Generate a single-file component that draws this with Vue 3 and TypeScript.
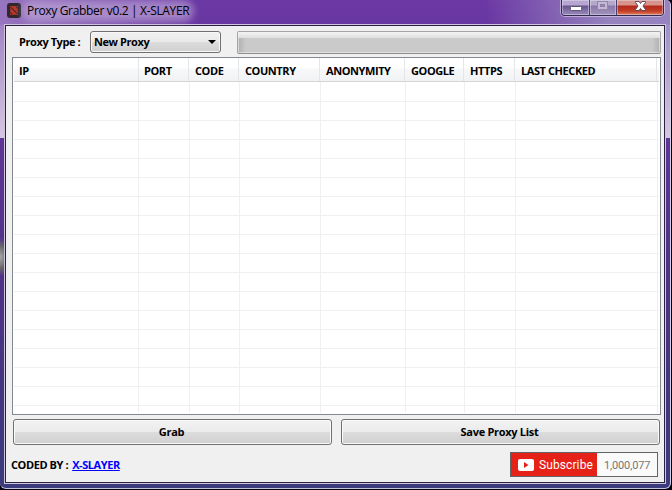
<template>
  <div class="window">
    <header class="titlebar">
      <svg class="app-icon" width="14" height="15" viewBox="0 0 14 15">
        <rect width="14" height="15" rx="3" fill="#30272d" />
        <path d="M3 3h8l-.5 3 .5 6-3-.3-5 .3.4-5z" fill="#b8392b" />
        <path d="M3.8 4.2 10.4 11M9 3.6l1.5 1.6M3.5 9.4l1.6 1.9" stroke="#4a2526" stroke-width="1.1" />
      </svg>
      <h1 class="title">Proxy Grabber v0.2 | X-SLAYER</h1>
      <div class="controls">
        <button class="control minimize" aria-label="Minimize">
          <svg width="27" height="15" viewBox="0 0 27 15">
            <rect x="8.5" y="6.5" width="11" height="4" rx="1" fill="#fff" stroke="#5c5677" />
          </svg>
        </button>
        <button class="control maximize" aria-label="Maximize">
          <svg width="26" height="15" viewBox="0 0 26 15">
            <rect x="7.5" y="1.5" width="10" height="8" fill="#c4b8d5" stroke="#9287a9" />
            <rect x="10.5" y="4.5" width="4" height="2" fill="#9d8db9" stroke="#8c7ca8" />
          </svg>
        </button>
        <button class="control close" aria-label="Close">
          <svg width="46" height="15" viewBox="0 0 46 15">
            <path d="M18.5 1.5h3.5l1.5 2 1.5-2h3.5v1l-2.5 3.5 2.5 3.5v1h-3.5l-1.5-2-1.5 2h-3.5v-1l2.5-3.5-2.5-3.5z" fill="#fff" stroke="#5b4656" />
          </svg>
        </button>
      </div>
    </header>

    <main class="client">
      <div class="toolbar">
        <label class="label">Proxy Type :</label>
        <div class="select">
          <span>{{ proxyType }}</span>
          <svg width="8" height="4" viewBox="0 0 8 4"><path d="M0 0h8L4 4z" fill="#000" /></svg>
        </div>
        <div class="progress"></div>
      </div>

      <div class="list">
        <div class="list-head">
          <div v-for="col in columns" :key="col.name" class="head-cell" :style="{ width: col.width + 'px' }">
            {{ col.name }}
          </div>
        </div>
        <div class="list-body">
          <div v-for="row in 18" :key="row" class="row">
            <div v-for="col in columns" :key="col.name" class="cell" :style="{ width: col.width + 'px' }"></div>
          </div>
        </div>
      </div>

      <div class="actions">
        <button class="action">Grab</button>
        <button class="action">Save Proxy List</button>
      </div>

      <footer class="footer">
        <span class="coded">CODED BY :</span>
        <a class="author" href="#">X-SLAYER</a>
        <div class="subscribe">
          <div class="subscribe-btn">
            <svg width="16" height="12" viewBox="0 0 16 12">
              <rect width="16" height="12" rx="2" fill="#fff" />
              <path d="M6 3v6l4.5-3z" fill="#e62117" />
            </svg>
            <span>Subscribe</span>
          </div>
          <div class="count">1,000,077</div>
        </div>
      </footer>
    </main>
  </div>
</template>

<script setup lang="ts">
import { ref } from 'vue';

interface Column {
  name: string;
  width: number;
}

const proxyType = ref<string>('New Proxy');

const columns: Column[] = [
  { name: 'IP', width: 125 },
  { name: 'PORT', width: 51 },
  { name: 'CODE', width: 50 },
  { name: 'COUNTRY', width: 81 },
  { name: 'ANONYMITY', width: 85 },
  { name: 'GOOGLE', width: 59 },
  { name: 'HTTPS', width: 51 },
  { name: 'LAST CHECKED', width: 142 }
];
</script>

<style>
body {
  margin: 0;
  background: #08040f;
  overflow: hidden;
}
</style>

<style scoped>
* {
  box-sizing: border-box;
}

.window {
  width: 671px;
  height: 489px;
  padding: 0 4px 4px;
  border-right: 1px solid #d5cfe6;
  border-bottom: 1px solid #c3c2df;
  border-radius: 0 5px 6px 6px;
  font: 700 11px/14px "Open Sans", "Noto Sans", sans-serif;
  letter-spacing: -0.42px;
  color: #000;
  background:
    radial-gradient(ellipse 12px 19px at 0 257px, #a9a9a9 0%, #686568 60%, transparent 100%),
    linear-gradient(180deg, transparent 24px, rgba(222, 212, 232, 0.15) 25px, rgba(222, 212, 232, 0.85) 138px, transparent 138px),
    linear-gradient(80deg, rgba(190, 170, 215, 0.6), transparent 210px, transparent 500px, rgba(180, 180, 210, 0.6) 620px) 0 0 / 100% 138px no-repeat,
    linear-gradient(180deg, #6b38a4 0, #5f3596 138px, #4e3285 290px, #3a3b7c 489px);
}

.titlebar {
  display: flex;
  height: 24px;
}

.app-icon {
  margin: 3px 0 0 3px;
}

/* Aero glow behind the caption */
.title {
  margin: 5px 0 0 6px;
  height: 12px;
  font-size: 12px;
  font-weight: 400;
  line-height: 11px;
  letter-spacing: -0.34px;
  white-space: nowrap;
  border-radius: 6px;
  background: rgba(200, 180, 222, 0.55);
  box-shadow: 0 0 7px 5px rgba(200, 180, 222, 0.55);
}

.controls {
  display: flex;
  width: 103px;
  height: 16px;
  margin: 0 2px 0 auto;
  border: 1px solid #322b50;
  border-top: 0;
  border-radius: 0 0 4px 4px;
  box-shadow: 0 0 0 1px rgba(225, 215, 240, 0.6);
  overflow: hidden;
}

.control {
  padding: 0;
  border: 0;
  height: 15px;
  box-shadow: inset 0 0 0 1px rgba(235, 228, 245, 0.45);
}

.control svg {
  display: block;
}

.minimize {
  width: 28px;
  border-right: 1px solid #4b4169;
  background: linear-gradient(#b6a6d1 0 5px, #67548d 6px, #9a8bbb 15px);
}

.maximize {
  width: 27px;
  border-right: 1px solid #4b4169;
  background: linear-gradient(#b5a9cb 0 5px, #8878a8 6px, #a193bd 15px);
}

.close {
  width: 46px;
  background: linear-gradient(#d8948b 0 5px, #b2291c 6px, #c23e25 11px, #e08062 15px);
}

.client {
  width: 662px;
  height: 460px;
  background: #f0f0f0;
  border: 1px solid #d0c4de;
  box-shadow: inset 0 0 0 1px #28213f;
  padding: 6px 4px 1px 7px;
}

.toolbar {
  display: flex;
  height: 22px;
}

.label {
  width: 71px;
  margin-left: 7px;
  line-height: 22px;
  white-space: nowrap;
}

.select {
  display: flex;
  align-items: center;
  justify-content: space-between;
  width: 131px;
  height: 22px;
  padding: 0 4px 0 3px;
  border: 1px solid #707070;
  border-radius: 3px;
  box-shadow: inset 0 0 0 1px #f8f8f8;
  background: linear-gradient(#f2f2f2, #e9e9e9 50%, #dcdcdc 51%, #cfcfcf);
}

.progress {
  width: 424px;
  height: 23px;
  margin-left: 16px;
  border: 1px solid #a5a5a5;
  border-bottom-color: #8e8e8e;
  border-radius: 2px;
  box-shadow: inset 0 0 0 1px rgba(240, 240, 240, 0.6);
  background:
    linear-gradient(180deg, #f4f4f4 0, #dedede 6px, transparent 6px),
    linear-gradient(90deg, #b0b0b0, #cacaca 8px, #cacaca calc(100% - 8px), #b0b0b0);
}

.list {
  width: 649px;
  height: 358px;
  margin-top: 4px;
  padding: 0 1px;
  border: 1px solid #828790;
  background: #fff;
}

.list-head {
  display: flex;
  height: 24px;
  border-bottom: 1px solid #d5d5d5;
  background: linear-gradient(#fff 10px, #f7f8fa 11px, #f1f2f4);
}

.head-cell {
  padding: 6px 0 0 6px;
  border-right: 1px solid #e4e5e7;
  white-space: nowrap;
}

.head-cell:first-child {
  margin-right: -1px;
  padding-left: 5px;
}

.list-body {
  height: 331px;
  overflow: hidden;
}

.row {
  display: flex;
  height: 19px;
  border-bottom: 1px solid #f0f0f0;
}

.row:first-child {
  height: 20px;
}

.cell {
  border-right: 1px solid #f0f0f0;
}

.actions {
  display: flex;
  gap: 9px;
  margin: 4px 0 0 1px;
}

.action {
  width: 319px;
  height: 26px;
  padding: 0 2px 1px 0;
  font: inherit;
  letter-spacing: -0.3px;
  color: #000;
  border: 1px solid #707070;
  border-radius: 3px;
  box-shadow: inset 0 0 0 1px #fafafa;
  background: linear-gradient(#f2f2f2, #ebebeb 48%, #dddddd 50%, #cfcfcf);
}

.footer {
  display: flex;
  margin-top: 7px;
}

.coded {
  margin: 6px 0 0 -1px;
  white-space: nowrap;
}

.author {
  margin: 6px 0 0 4px;
  color: #00f;
  white-space: nowrap;
}

.subscribe {
  display: flex;
  width: 148px;
  height: 25px;
  margin: 0 3px 0 auto;
  border: 1px solid #646464;
  font-family: Roboto, sans-serif;
  letter-spacing: 0;
}

.subscribe-btn {
  display: flex;
  align-items: center;
  gap: 5px;
  width: 86px;
  padding-left: 7px;
  font-size: 12px;
  font-weight: 400;
  letter-spacing: 0.1px;
  color: #fff;
  background: #e62117;
}

.count {
  flex: 1;
  padding-left: 7px;
  font-size: 11px;
  font-weight: 400;
  line-height: 25px;
  letter-spacing: -0.15px;
  color: #757575;
  background: #fafafa;
}
</style>
